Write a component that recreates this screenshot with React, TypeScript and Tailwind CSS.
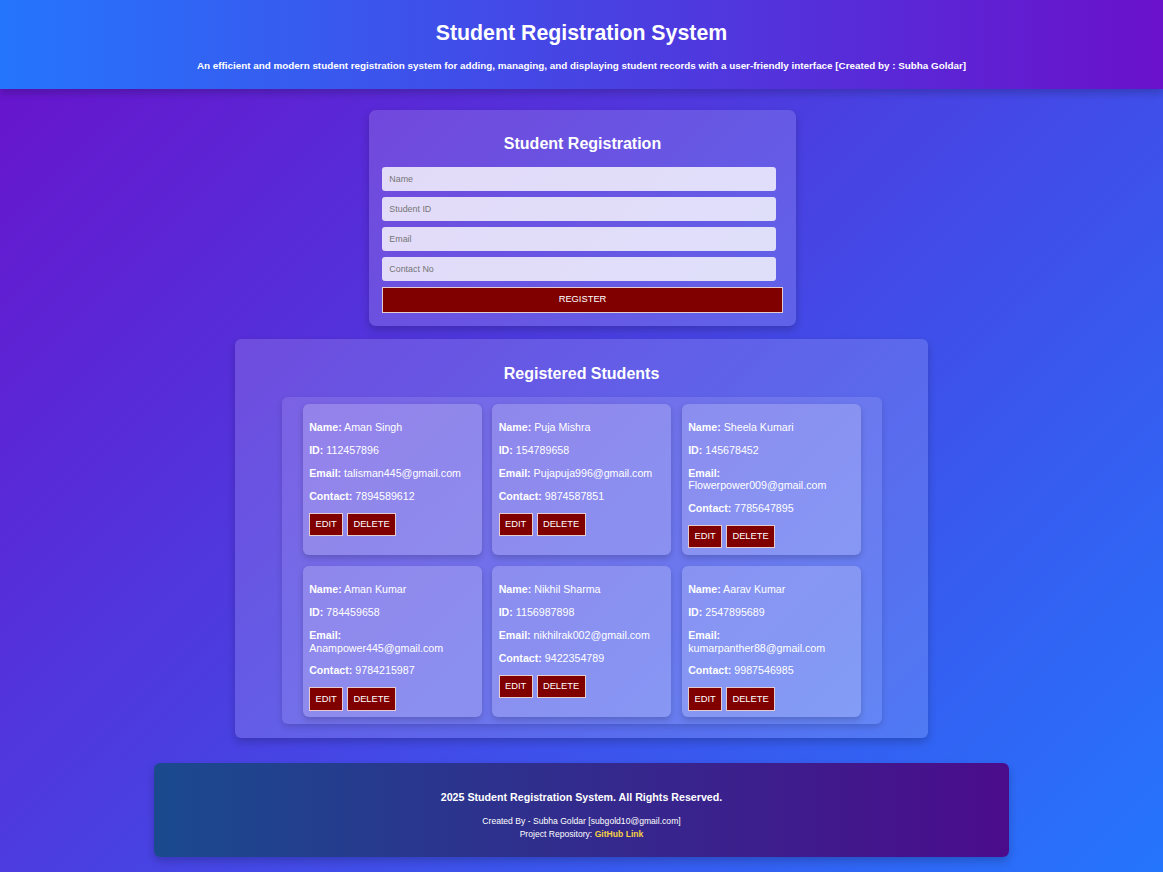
import React from "react";

type Student = {
  name: string;
  id: string;
  email: string;
  contact: string;
};

const students: Student[] = [
  { name: "Aman Singh", id: "112457896", email: "talisman445@gmail.com", contact: "7894589612" },
  { name: "Puja Mishra", id: "154789658", email: "Pujapuja996@gmail.com", contact: "9874587851" },
  { name: "Sheela Kumari", id: "145678452", email: "Flowerpower009@gmail.com", contact: "7785647895" },
  { name: "Aman Kumar", id: "784459658", email: "Anampower445@gmail.com", contact: "9784215987" },
  { name: "Nikhil Sharma", id: "1156987898", email: "nikhilrak002@gmail.com", contact: "9422354789" },
  { name: "Aarav Kumar", id: "2547895689", email: "kumarpanther88@gmail.com", contact: "9987546985" },
];

const StudentCard: React.FC<{ student: Student }> = ({ student }) => (
  <div className="rounded-[6px] bg-white/20 p-[6.67px] shadow-[0_3px_6px_rgba(0,0,0,0.18)] text-[10.67px] leading-[1.15] text-white">
    <p className="my-[10.67px]">
      <strong>Name:</strong> {student.name}
    </p>
    <p className="my-[10.67px]">
      <strong>ID:</strong> {student.id}
    </p>
    <p className="my-[10.67px]">
      <strong>Email:</strong> {student.email}
    </p>
    <p className="my-[10.67px]">
      <strong>Contact:</strong> {student.contact}
    </p>
    <div className="flex gap-[4px]">
      <button className="border border-white/80 bg-[#800000] px-[5.33px] py-[5.33px] text-[9.33px] leading-[1.15] text-white">
        EDIT
      </button>
      <button className="border border-white/80 bg-[#800000] px-[5.33px] py-[5.33px] text-[9.33px] leading-[1.15] text-white">
        DELETE
      </button>
    </div>
  </div>
);

const App: React.FC = () => {
  const fields = ["Name", "Student ID", "Email", "Contact No"];

  return (
    <div className="min-h-screen bg-[linear-gradient(135deg,#6a11cb,#2575fc)] font-['Liberation_Sans',Arial,sans-serif] text-white">
      {/* Header */}
      <header className="relative z-10 bg-[linear-gradient(to_right,#2575fc,#6a11cb)] pt-[21px] pb-[17.5px] text-center shadow-[0_4px_8px_rgba(0,0,0,0.2)]">
        <h1 className="text-[21.33px] font-bold leading-[1.15]">Student Registration System</h1>
        <p className="mt-[14.5px] text-[9.85px] font-bold leading-[1.15]">
          An efficient and modern student registration system for adding, managing, and displaying student
          records with a user-friendly interface [Created by : Subha Goldar]
        </p>
      </header>

      <main className="flex flex-col items-center pt-[21px]">
        {/* Registration form */}
        <section className="ml-[2px] w-[427px] rounded-[7px] bg-white/15 px-[13.33px] pt-[25.5px] pb-[13px] shadow-[0_4px_8px_rgba(0,0,0,0.2)]">
          <h2 className="text-center text-[16px] font-bold leading-[1.15]">Student Registration</h2>
          <div className="mt-[13.1px] flex flex-col gap-[6px]">
            {fields.map((f) => (
              <input
                key={f}
                placeholder={f}
                className="h-[24px] w-[394px] rounded-[3.3px] bg-white/80 px-[7px] text-[8.9px] text-black outline-none placeholder:text-[#757575]"
              />
            ))}
            <button className="h-[26px] w-full border border-white/80 bg-[#800000] text-[9.33px] text-white">
              REGISTER
            </button>
          </div>
        </section>

        {/* Registered students */}
        <section className="mt-[13px] w-[693px] rounded-[6px] bg-white/15 pt-[26.5px] pb-[14px] shadow-[0_4px_8px_rgba(0,0,0,0.2)]">
          <h2 className="text-center text-[16px] font-bold leading-[1.15]">Registered Students</h2>
          <div className="mx-auto mt-[13.1px] grid w-[600px] grid-cols-3 gap-x-[10.5px] gap-y-[11px] rounded-[6px] bg-white/10 px-[21px] py-[7px] shadow-[0_3px_6px_rgba(0,0,0,0.15)]">
            {students.map((s) => (
              <StudentCard key={s.id} student={s} />
            ))}
          </div>
        </section>

        {/* Footer */}
        <footer className="mt-[25px] mb-[15px] w-[855px] rounded-[6px] bg-[linear-gradient(to_right,#1a4a8e,#4b0c8c)] pt-[27.5px] pb-[16px] text-center shadow-[0_4px_8px_rgba(0,0,0,0.2)]">
          <p className="text-[10.67px] font-bold leading-[1.15]">
            2025 Student Registration System. All Rights Reserved.
          </p>
          <p className="mt-[12px] text-[8.6px] leading-[13px]">
            Created By - Subha Goldar [subgold10@gmail.com]
            <br />
            Project Repository: <span className="font-bold text-[#f5d142]">GitHub Link</span>
          </p>
        </footer>
      </main>
    </div>
  );
};

export default App;
